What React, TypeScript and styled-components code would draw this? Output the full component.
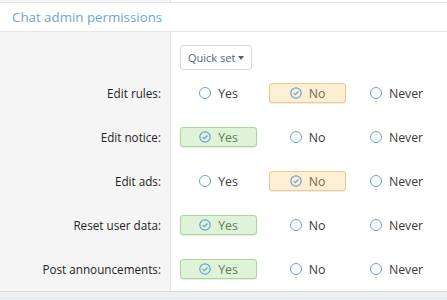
import React from "react";
import styled, { createGlobalStyle } from "styled-components";

const GlobalStyle = createGlobalStyle`
  html, body {
    margin: 0;
    padding: 0;
    background: #ffffff;
    font-family: "Open Sans", "Noto Sans", sans-serif;
  }
`;

const Page = styled.div`
  width: 447px;
  height: 300px;
  overflow: hidden;
  background: #eef3f8;
`;

const Block = styled.div`
  background: #ffffff;
  border-bottom: 1px solid #dcdcdc;
`;

const PrevRow = styled.div`
  display: grid;
  grid-template-columns: 171px 1fr;
  height: 2px;
  border-bottom: 1px solid #e6e6e6;
`;

const Side = styled.div`
  background: #f5f5f5;
  border-right: 1px solid #e3e3e3;
`;

const Header = styled.h3`
  margin: 0;
  height: 28px;
  padding: 0 12px;
  display: flex;
  align-items: center;
  font-size: 13.3px;
  font-weight: 400;
  color: #6ea5d8;
  border-bottom: 1px solid #e6e6e6;
`;

const Body = styled.div`
  display: grid;
  grid-template-columns: 171px 1fr;
`;

const Labels = styled(Side)`
  display: flex;
  flex-direction: column;
  padding-top: 39px;
`;

const Label = styled.div`
  height: 44px;
  display: flex;
  align-items: center;
  justify-content: flex-end;
  padding-right: 9px;
  font-size: 11.7px;
  color: #1e1e1e;
`;

const Content = styled.div`
  display: flex;
  flex-direction: column;
  padding: 13px 0 0 9px;
`;

const QuickSet = styled.button`
  align-self: flex-start;
  height: 25px;
  margin-bottom: 1px;
  padding: 0 7px;
  display: flex;
  align-items: center;
  gap: 3px;
  white-space: nowrap;
  background: #ffffff;
  border: 1px solid #dadada;
  border-radius: 3px;
  font-family: inherit;
  font-size: 11px;
  color: #52657a;
`;

const Caret = styled.span`
  width: 0;
  height: 0;
  border-left: 3.5px solid transparent;
  border-right: 3.5px solid transparent;
  border-top: 4px solid #52657a;
`;

const OptionRow = styled.div`
  height: 44px;
  display: grid;
  grid-template-columns: repeat(3, 77px);
  column-gap: 12px;
  align-items: center;
`;

type Tone = "yes" | "no" | "never";

const tones: Record<Tone, { bg: string; border: string; text: string }> = {
  yes: { bg: "#dff3d9", border: "#a8d79b", text: "#5a7a52" },
  no: { bg: "#fdefd4", border: "#f0c98a", text: "#7a6a4a" },
  never: { bg: "#f6dede", border: "#e6a9a9", text: "#7a4a4a" },
};

const Option = styled.label<{ $tone: Tone; $on: boolean }>`
  height: 20px;
  box-sizing: border-box;
  display: flex;
  align-items: center;
  justify-content: center;
  gap: 7px;
  border-radius: 3px;
  font-size: 12.3px;
  border: 1px solid ${(p) => (p.$on ? tones[p.$tone].border : "transparent")};
  background: ${(p) => (p.$on ? tones[p.$tone].bg : "transparent")};
  color: ${(p) => (p.$on ? tones[p.$tone].text : "#3c3c3c")};
  box-shadow: ${(p) => (p.$on ? "0 1px 1px rgba(0,0,0,0.08)" : "none")};
`;

const Dot = styled.span`
  width: 10px;
  height: 10px;
  border: 1.3px solid #6a9fd3;
  border-radius: 50%;
  background: #ffffff;
`;

const Check = () => (
  <svg width="12" height="12" viewBox="0 0 12 12">
    <circle cx="6" cy="6" r="5.2" fill="none" stroke="#6a9fd3" strokeWidth="1.2" />
    <path d="M3.6 6.1 L5.3 7.7 L8.4 4.5" fill="none" stroke="#6a9fd3" strokeWidth="1.2" />
  </svg>
);

const rows: { label: string; value: Tone }[] = [
  { label: "Edit rules:", value: "no" },
  { label: "Edit notice:", value: "yes" },
  { label: "Edit ads:", value: "no" },
  { label: "Reset user data:", value: "yes" },
  { label: "Post announcements:", value: "yes" },
];

const names: Record<Tone, string> = { yes: "Yes", no: "No", never: "Never" };

const Footer = styled.div`
  height: 6px;
  background: #f0f0f0;
  border-bottom: 1px solid #e4e8ee;
`;

export default function App() {
  return (
    <Page>
      <GlobalStyle />
      <Block>
        <PrevRow>
          <Side />
          <div />
        </PrevRow>
        <Header>Chat admin permissions</Header>
        <Body>
          <Labels>
            {rows.map((r) => (
              <Label key={r.label}>{r.label}</Label>
            ))}
          </Labels>
          <Content>
            <QuickSet>
              Quick set <Caret />
            </QuickSet>
            {rows.map((r) => (
              <OptionRow key={r.label}>
                {(["yes", "no", "never"] as Tone[]).map((t) => (
                  <Option key={t} $tone={t} $on={r.value === t}>
                    {r.value === t ? <Check /> : <Dot />}
                    {names[t]}
                  </Option>
                ))}
              </OptionRow>
            ))}
          </Content>
        </Body>
      </Block>
      <Footer />
    </Page>
  );
}
